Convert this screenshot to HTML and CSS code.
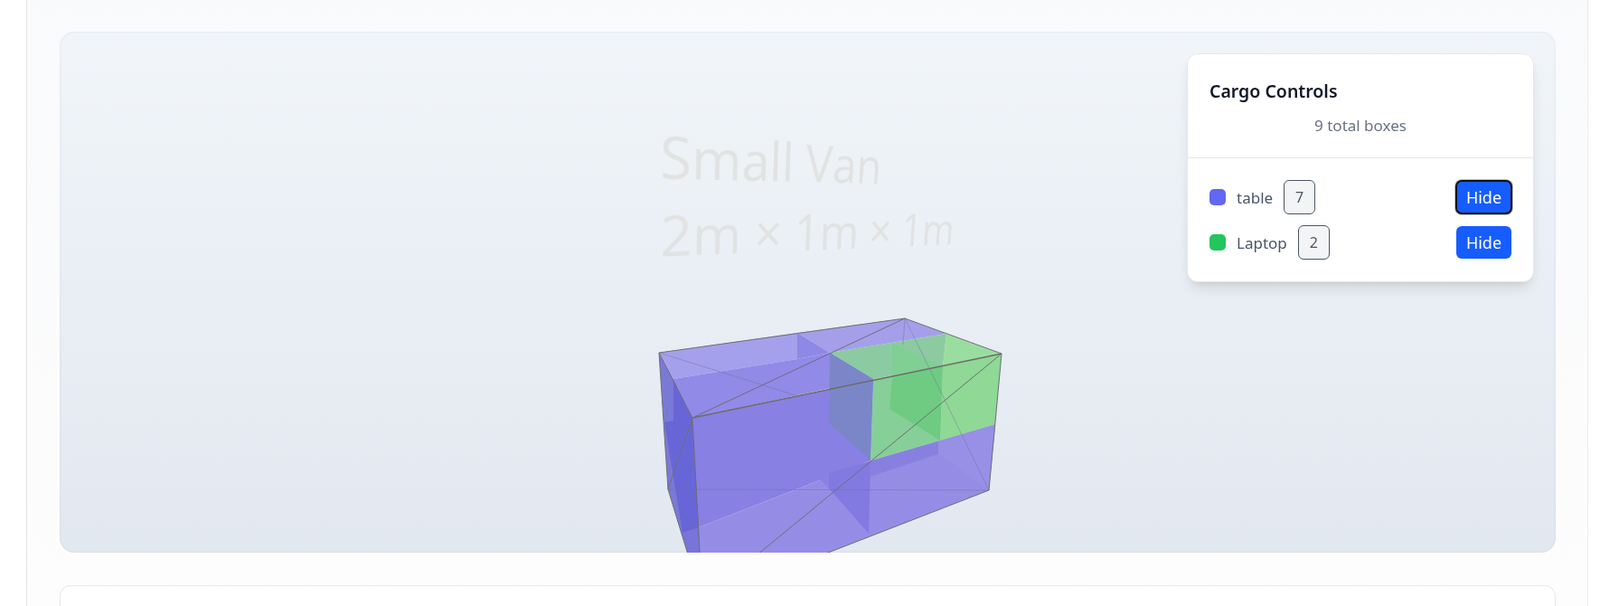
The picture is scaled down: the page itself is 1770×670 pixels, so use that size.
FILE: index.html
```html
<!DOCTYPE html>
<html lang="en">
<head>
    <meta charset="UTF-8">
    <title>Cargo Viewer</title>
    <link rel="stylesheet" href="styles.css">
</head>
<body>
    <main class="page-panel">
        <section class="viewer">
            <!-- van label, lies on a plane in the 3D scene -->
            <div class="van-label">
                <div class="van-line">Small Van</div>
                <div class="van-line">2m × 1m × 1m</div>
            </div>

            <svg class="van-scene" viewBox="66 35 1655 576" aria-hidden="true">
                <!-- left face -->
                <polygon fill="#7b79d7" points="729,390 745,419 766,462 777,665 739,541"/>
                <polygon fill="#6866d7" points="745,419 766,462 774,583 755,589 735,467 745,465"/>
                <polygon fill="#7874d9" points="739,541 755,589 774,583 777,665"/>
                <!-- top face -->
                <polygon fill="#a5a0eb" points="729,390 882,368 882,397 745,419"/>
                <polygon fill="#a59fea" points="882,368 1001,352 1047,369 918,390"/>
                <polygon fill="#8e88e6" points="882,368 918,390 882,397"/>
                <polygon fill="#918ae7" points="745,419 882,397 918,390 966,419 766,462"/>
                <!-- front face -->
                <polygon fill="#8880e3" points="766,462 966,420 963,509 773,583"/>
                <polygon fill="#958de5" points="773,583 963,509 1101,469 1094,542 777,665"/>
                <polygon fill="#8880e0" points="963,510 1038,488 1038,502 963,527"/>
                <polygon fill="#827ae0" points="917,523 963,510 961,590 917,540"/>
                <polygon fill="#8a82e2" points="917,523 907,530 917,540"/>
                <polygon fill="#9890e6" points="1038,488 1101,469 1094,542 1038,502"/>
                <!-- green boxes -->
                <polygon fill="#8ccaa2" points="918,390 1047,369 1043,405 966,419"/>
                <polygon fill="#9ade9f" points="1047,369 1108,391 1043,405"/>
                <polygon fill="#8fd896" points="1043,405 1108,391 1101,469 1040,487"/>
                <polygon fill="#86cf98" points="966,419 1043,405 1040,487 963,509"/>
                <polygon fill="#80cf93" points="987,380 1043,405 987,416"/>
                <polygon fill="#6fcb82" points="987,416 1043,405 1040,487 984,452"/>
                <polygon fill="#7b86c9" points="918,390 966,419 963,509 917,468"/>
                <!-- wireframe -->
                <g class="wire">
                    <polyline points="729,390 1001,352 1108,391"/>
                    <polyline points="729,390 766,462 777,665 739,541 729,390"/>
                    <polyline points="1108,391 1094,542 777,665"/>
                    <line class="wire-strong" x1="766" y1="462" x2="1108" y2="391"/>
                    <line x1="766" y1="462" x2="1001" y2="352"/>
                    <line x1="766" y1="462" x2="739" y2="541"/>
                    <line x1="1108" y1="391" x2="775" y2="665"/>
                </g>
                <g class="wire wire-faint">
                    <line x1="729" y1="390" x2="880" y2="437"/>
                    <line x1="739" y1="541" x2="1094" y2="542"/>
                    <line x1="1001" y1="352" x2="1094" y2="542"/>
                    <line x1="1001" y1="352" x2="999" y2="381"/>
                </g>
            </svg>

            <aside class="cargo-panel">
                <div class="cargo-header">
                    <h3 class="cargo-title">Cargo Controls</h3>
                    <p class="cargo-total">9 total boxes</p>
                </div>
                <div class="cargo-list">
                    <div class="cargo-row">
                        <span class="swatch swatch-table"></span>
                        <span class="cargo-name">table</span>
                        <span class="count-badge">7</span>
                        <button class="hide-button is-focused">Hide</button>
                    </div>
                    <div class="cargo-row">
                        <span class="swatch swatch-laptop"></span>
                        <span class="cargo-name">Laptop</span>
                        <span class="count-badge">2</span>
                        <button class="hide-button">Hide</button>
                    </div>
                </div>
            </aside>
        </section>

        <section class="details-card"></section>
    </main>
</body>
</html>
```

FILE: styles.css
```css
html, body {
    height: 100%;
    overflow: hidden;
}

body {
    margin: 0;
    padding: 0 13px 0 29px;
    background-color: #fff;
    font-family: "Noto Sans", "Open Sans", sans-serif;
}

.page-panel {
    height: 100%;
    box-sizing: border-box;
    padding: 35px 35px 0 36px;
    border-left: 1px solid #e4e4e8;
    border-right: 1px solid #eeeef0;
    background: linear-gradient(#f9fafc, #fdfdfd);
}

.viewer {
    position: relative;
    height: 576px;
    box-sizing: border-box;
    overflow: hidden;
    border-radius: 16px;
    background: linear-gradient(#f1f5f9, #e2e8f0);
    box-shadow: inset 0 0 3px rgba(100, 116, 139, 0.14);
}

.van-scene {
    position: absolute;
    left: 0;
    top: 0;
    width: 100%;
    height: 100%;
}

.wire line, .wire polyline {
    fill: none;
    stroke: #6e6e78;
    stroke-width: 1;
}

.wire .wire-strong {
    stroke: #6e6c68;
    stroke-width: 1.5;
}

.wire-faint line {
    stroke: #6e6e9a;
    stroke-opacity: 0.45;
}

.van-label {
    position: absolute;
    left: 0;
    top: 0;
    width: 400px;
    height: 135px;
    color: #e1e2e2;
    font-family: "Open Sans", sans-serif;
    font-size: 62px;
    font-weight: 400;
    line-height: 85px;
    white-space: nowrap;
    transform-origin: 0 0;
    transform: matrix3d(1.6, 0.155, 0, 0.0008, 0.166, 1.09, 0, 0.00025, 0, 0, 1, 0, 664, 111, 0, 1);
}

.van-line:first-child {
    margin-top: -17px;
}

.cargo-panel {
    position: absolute;
    top: 24px;
    right: 24px;
    width: 384px;
    border: 1px solid #e5e7eb;
    box-sizing: border-box;
    border-radius: 12px;
    background-color: #fff;
    box-shadow: 0 10px 15px -3px rgba(0, 0, 0, 0.1), 0 4px 6px -4px rgba(0, 0, 0, 0.1);
}

.cargo-header {
    padding: 26px 24px 23px;
    border-bottom: 1px solid #e5e7eb;
}

.cargo-title {
    margin: 0 0 11px;
    color: #111827;
    font-size: 19.5px;
    font-weight: 600;
    line-height: 30px;
}

.cargo-total {
    margin: 0;
    color: #6b7280;
    font-size: 17px;
    line-height: 24px;
    text-align: center;
}

.cargo-list {
    display: flex;
    flex-direction: column;
    gap: 12px;
    padding: 24px;
}

.cargo-row {
    display: flex;
    align-items: center;
}

.swatch {
    width: 18px;
    height: 18px;
    margin-right: 12px;
    border-radius: 5px;
}

.swatch-table {
    background-color: #6366f1;
}

.swatch-laptop {
    background-color: #22c55e;
}

.cargo-name {
    margin-right: 12px;
    color: #475569;
    font-size: 17px;
}

.count-badge {
    box-sizing: border-box;
    min-width: 35px;
    height: 38px;
    padding: 0 10px;
    border: 1px solid #4b5563;
    border-radius: 6px;
    background-color: #f3f4f6;
    color: #4b5563;
    font-size: 16px;
    line-height: 36px;
    text-align: center;
}

.hide-button {
    width: 61px;
    height: 36px;
    margin-left: auto;
    padding: 0;
    border: none;
    border-radius: 6px;
    background-color: #165dff;
    color: #fff;
    font-family: inherit;
    font-size: 18px;
}

.hide-button.is-focused {
    outline: 2px solid #111;
    outline-offset: -1px;
    box-shadow: 0 0 0 2px rgba(0, 0, 0, 0.25);
}

.details-card {
    height: 200px;
    margin-top: 36px;
    border: 1px solid #e5e7eb;
    border-radius: 12px;
    background-color: #fff;
}
```
